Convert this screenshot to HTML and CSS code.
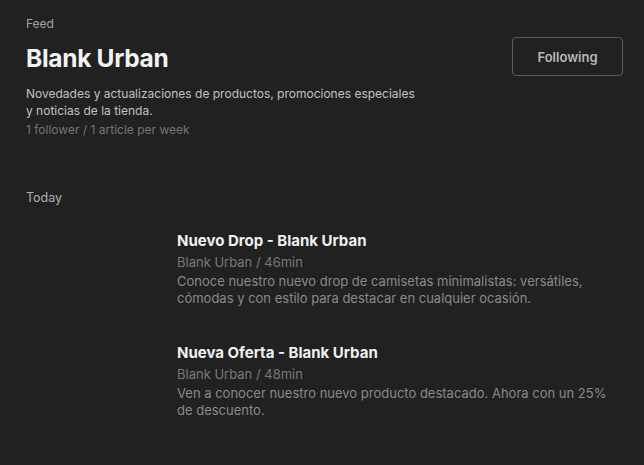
FILE: index.html
```html
<!DOCTYPE html>
<html lang="es">
<head>
<meta charset="utf-8">
<link rel="stylesheet" href="styles.css">
</head>
<body>
<main class="page">
  <header class="head">
    <div class="head-info">
      <div class="crumb">Feed</div>
      <h1 class="title">Blank Urban</h1>
      <p class="desc">Novedades y actualizaciones de productos, promociones especiales<br>y noticias de la tienda.</p>
      <p class="stats">1 follower / 1 article per week</p>
    </div>
    <button class="follow">Following</button>
  </header>
  <section class="day">
    <h2 class="day-label">Today</h2>
    <article class="item">
      <div class="thumb"></div>
      <div class="item-body">
        <h3 class="item-title">Nuevo Drop - Blank Urban</h3>
        <div class="item-meta">Blank Urban / 46min</div>
        <p class="item-text">Conoce nuestro nuevo drop de camisetas minimalistas: versátiles, cómodas y con estilo para destacar en cualquier ocasión.</p>
      </div>
    </article>
    <article class="item">
      <div class="thumb"></div>
      <div class="item-body">
        <h3 class="item-title">Nueva Oferta - Blank Urban</h3>
        <div class="item-meta">Blank Urban / 48min</div>
        <p class="item-text">Ven a conocer nuestro nuevo producto destacado. Ahora con un 25% de descuento.</p>
      </div>
    </article>
  </section>
</main>
</body>
</html>
```
FILE: styles.css
```css
* { box-sizing: border-box; }
html, body { margin: 0; padding: 0; background: #212121; }
body { font-family: Inter, "Noto Sans", sans-serif; color: #e8e8e8; }
.page { padding: 16px 21px 0 26px; }
.head { display: flex; justify-content: space-between; align-items: flex-start; }
.crumb { font-size: 12px; line-height: 16px; color: #a3a3a3; }
.title { margin: 11px 0 0; font-size: 24.5px; line-height: 30px; font-weight: 700; letter-spacing: -0.3px; color: #f2f2f2; }
.desc { margin: 12px 0 0; font-size: 12px; line-height: 17px; color: #c2c2c2; }
.stats { margin: 3px 0 0; font-size: 12px; line-height: 16px; color: #757575; }
.follow { margin-top: 21px; width: 111px; height: 39px; background: transparent; border: 1px solid #5a5a5a; border-radius: 4px; color: #b8b8b8; font-family: inherit; font-size: 13px; font-weight: 600; }
.day { margin-top: 52px; }
.day-label { margin: 0; font-size: 12.5px; line-height: 16px; font-weight: 400; color: #b0b0b0; }
.item { display: flex; gap: 16px; margin-top: 25px; }
.item + .item { margin-top: 36px; }
.thumb { width: 135px; flex: none; }
.item-body { width: 440px; }
.item-title { margin: 0; font-size: 15px; line-height: 20px; font-weight: 700; color: #f0f0f0; letter-spacing: 0; }
.item-meta { margin-top: 2px; font-size: 13px; line-height: 18px; color: #7a7a7a; }
.item-text { margin: 2px 0 0; font-size: 13px; line-height: 17px; color: #8a8a8a; }
```
